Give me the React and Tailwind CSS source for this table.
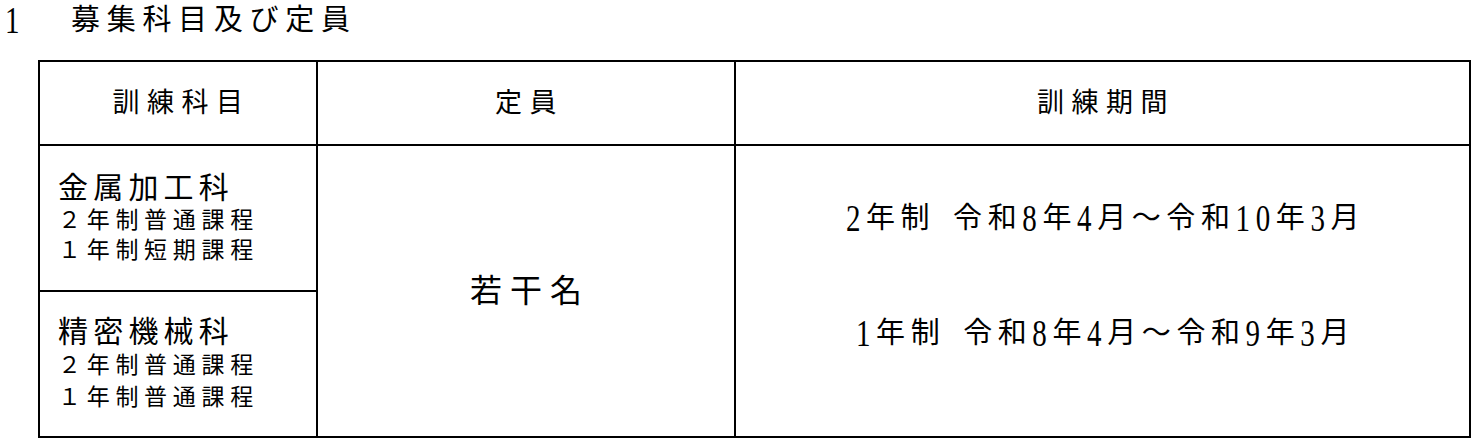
import React from "react";

const serif = { fontFamily: '"Liberation Serif", "Noto Sans CJK JP", serif' };

const courses = [
  { name: "金属加工科", lines: ["２年制普通課程", "１年制短期課程"] },
  { name: "精密機械科", lines: ["２年制普通課程", "１年制普通課程"] },
];

const periods = ["2年制 令和8年4月～令和10年3月", "1年制 令和8年4月～令和9年3月"];

// half-width digits in the original are tall mincho digits, so stretch them a bit
const Tall = ({ text }) =>
  text.split("").map((c, i) =>
    /[0-9]/.test(c) ? (
      <span key={i} className="inline-block scale-y-[1.32]">{c}</span>
    ) : (
      c
    )
  );

const App = () => {
  return (
    <div className="w-[1479px] h-[448px] bg-white text-black" style={serif}>
      {/* heading */}
      <div className="flex items-center h-[40px] pl-[5px] text-[29px] leading-[36px]">
        <span className="w-[66px]"><Tall text="1" /></span>
        <span className="tracking-[6.7px]">募集科目及び定員</span>
      </div>

      {/* table: black grid background shows through the gaps as rules */}
      <div className="ml-[38px] mt-[20px] w-[1433px] grid grid-cols-[276px_416px_733px] grid-rows-[82px_144px_144px] gap-[2px] border-2 border-black bg-black">
        <div className="bg-white flex items-center justify-center pl-[7px] text-[27px] tracking-[7.5px]">訓練科目</div>
        <div className="bg-white flex items-center justify-center pl-[7px] text-[27px] tracking-[7.5px]">定員</div>
        <div className="bg-white flex items-center justify-center pl-[7px] text-[27px] tracking-[7.5px]">訓練期間</div>

        <div className="bg-white flex flex-col justify-center pl-[18px]">
          <div className="text-[30px] leading-[36px] tracking-[5.2px]">{courses[0].name}</div>
          {courses[0].lines.map((l) => (
            <div key={l} className="text-[23px] leading-[30px] tracking-[5.7px]">{l}</div>
          ))}
        </div>
        <div className="row-span-2 bg-white flex items-center justify-center pl-[8px] text-[32px] tracking-[8px]">若干名</div>
        <div className="row-span-2 bg-white flex flex-col items-center justify-center gap-[79px] pb-[31px] pl-[6px]">
          {periods.map((p) => (
            <div key={p} className="text-[29px] leading-[36px] tracking-[5.6px] [word-spacing:5px] whitespace-pre">
              <Tall text={p} />
            </div>
          ))}
        </div>

        <div className="bg-white flex flex-col justify-center pl-[18px]">
          <div className="text-[30px] leading-[36px] tracking-[5.2px]">{courses[1].name}</div>
          {courses[1].lines.map((l, i) => (
            <div key={i} className="text-[23px] leading-[32px] tracking-[5.7px]">{l}</div>
          ))}
        </div>
      </div>
    </div>
  );
};

export default App;
